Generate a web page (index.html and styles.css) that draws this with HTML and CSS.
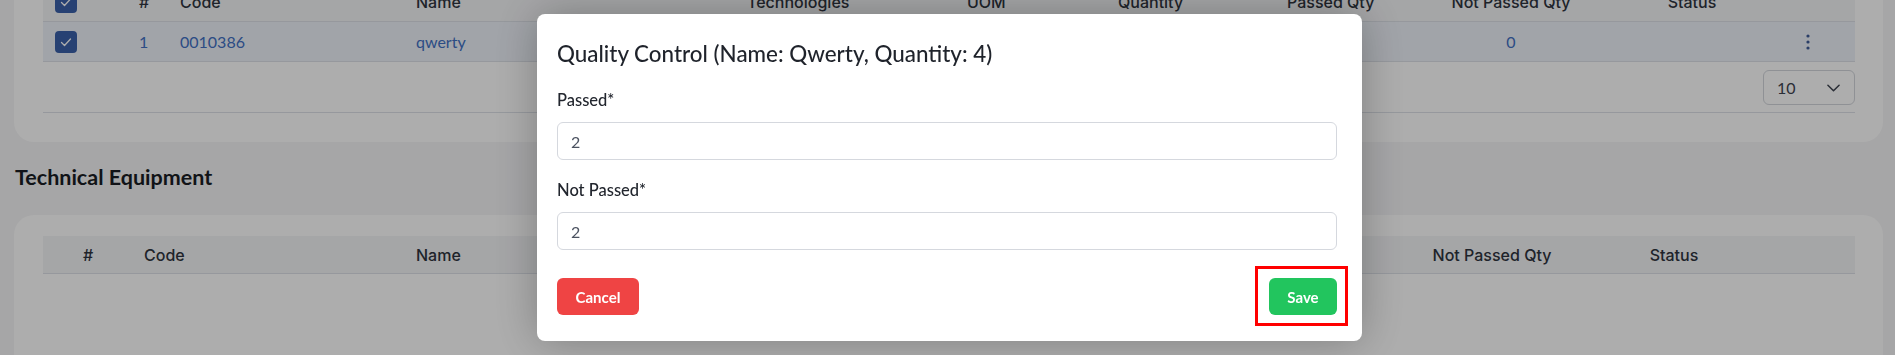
FILE: index.html
```html
<!DOCTYPE html>
<html lang="en">
<head>
<meta charset="utf-8">
<title>Quality Control</title>
<link rel="stylesheet" href="styles.css">
</head>
<body>
<main class="page">
  <section class="card card-top">
    <div class="grid grid-qc head-row">
      <div class="cell cell-chk"><svg class="chk" viewBox="0 0 22 22"><rect width="22" height="22" rx="4"/><path d="M6.5 11.5l3 3 6-6.5"/></svg></div>
      <div class="cell">#</div>
      <div class="cell">Code</div>
      <div class="cell">Name</div>
      <div class="cell">Technologies</div>
      <div class="cell">UOM</div>
      <div class="cell">Quantity</div>
      <div class="cell">Passed Qty</div>
      <div class="cell center">Not Passed Qty</div>
      <div class="cell center">Status</div>
      <div class="cell"></div>
    </div>
    <div class="grid grid-qc body-row selected">
      <div class="cell cell-chk"><svg class="chk" viewBox="0 0 22 22"><rect width="22" height="22" rx="4"/><path d="M6.5 11.5l3 3 6-6.5"/></svg></div>
      <div class="cell link">1</div>
      <div class="cell link">0010386</div>
      <div class="cell link">qwerty</div>
      <div class="cell link"></div>
      <div class="cell link">pcs</div>
      <div class="cell link">4</div>
      <div class="cell link">0</div>
      <div class="cell link center">0</div>
      <div class="cell center"></div>
      <div class="cell cell-act"><svg class="kebab" viewBox="0 0 4 16"><circle cx="2" cy="2" r="1.6"/><circle cx="2" cy="8" r="1.6"/><circle cx="2" cy="14" r="1.6"/></svg></div>
    </div>
    <div class="pager">
      <div class="select"><span>10</span><svg class="chev" viewBox="0 0 14 8"><path d="M1 1l6 6 6-6"/></svg></div>
    </div>
  </section>

  <h2 class="section-title">Technical Equipment</h2>

  <section class="card card-bottom">
    <div class="grid grid-te head-row head-te">
      <div class="cell cell-num">#</div>
      <div class="cell">Code</div>
      <div class="cell">Name</div>
      <div class="cell">Technologies</div>
      <div class="cell">UOM</div>
      <div class="cell">Quantity</div>
      <div class="cell">Passed Qty</div>
      <div class="cell center">Not Passed Qty</div>
      <div class="cell center">Status</div>
      <div class="cell"></div>
    </div>
  </section>
</main>

<div class="overlay"></div>

<div class="modal" role="dialog">
  <h3 class="modal-title">Quality Control (Name: Qwerty, Quantity: 4)</h3>
  <div class="field">
    <label class="label">Passed*</label>
    <div class="input">2</div>
  </div>
  <div class="field field-2">
    <label class="label">Not Passed*</label>
    <div class="input">2</div>
  </div>
  <div class="actions">
    <button class="btn btn-cancel">Cancel</button>
    <button class="btn btn-save">Save<span class="highlight"></span></button>
  </div>
</div>
</body>
</html>
```
FILE: styles.css
```css
* { box-sizing: border-box; }
html, body { margin: 0; padding: 0; }
body {
  background: #f5f5f7;
  font-family: "Lato", "Inter", sans-serif;
  color: #3e4450;
  width: 1895px;
  height: 355px;
  overflow: hidden;
}
.page {
  padding: 0 12px 0 14px;
  margin-top: -38px;
}
.card {
  background: #ffffff;
  border-radius: 20px;
}
.card-top {
  padding: 20px 28px 29px 29px;
}
.card-bottom {
  margin-top: 24px;
  padding: 21px 28px 0 29px;
  height: 220px;
}
.grid { display: grid; align-items: center; }
.grid-qc { grid-template-columns: 96px 41px 236px 331px 220px 151px 169px 127px 194px 168px 79px; }
.grid-te { grid-template-columns: 101px 272px 284px 200px 150px 150px 190px 204px 160px 101px; }
.head-row {
  height: 40px;
  background: #f4f5f7;
  border-bottom: 1px solid #dde1e8;
  font-family: "Inter", "Lato", sans-serif;
  font-size: 16px;
  font-weight: 500;
  color: #2f343e;
}
.head-te { height: 38px; }
.body-row {
  height: 40px;
  border-bottom: 1px solid #dde1e8;
  font-size: 16px;
}
.selected { background: #eef2f9; }
.cell { white-space: nowrap; line-height: 18px; }
.center { text-align: center; }
.cell-chk { padding-left: 12px; display: flex; align-items: center; }
.cell-num { padding-left: 40px; }
.cell-act { padding-left: 30px; display: flex; align-items: center; }
.link { color: #4170c4; }
.chk { width: 22px; height: 22px; display: block; }
.chk rect { fill: #3a60aa; }
.chk path { fill: none; stroke: #ffffff; stroke-width: 1.3; stroke-linecap: round; stroke-linejoin: round; }
.kebab { width: 4px; height: 16px; display: block; }
.kebab circle { fill: #3f5c98; }
.pager {
  display: flex;
  justify-content: flex-end;
  padding: 8px 0 7px;
  border-bottom: 1px solid #dde1e8;
}
.select {
  width: 92px;
  height: 35px;
  border: 1px solid #d3d6dc;
  border-radius: 6px;
  display: flex;
  align-items: center;
  justify-content: space-between;
  padding: 0 14px 0 13px;
  font-size: 16px;
  color: #3e4450;
}
.chev { width: 13px; height: 8px; display: block; }
.chev path { fill: none; stroke: #3e4450; stroke-width: 1.6; stroke-linecap: round; stroke-linejoin: round; }
.section-title {
  margin: 21px 0 0 1px;
  font-size: 21.5px;
  line-height: 28px;
  font-weight: 700;
  color: #1a1d24;
}
.overlay {
  position: fixed;
  inset: 0;
  background: rgba(0, 0, 0, 0.32);
}
.modal {
  position: fixed;
  top: 14px;
  left: 537px;
  width: 825px;
  background: #ffffff;
  border-radius: 8px;
  padding: 26px 25px 26px 20px;
  box-shadow: 0 0 45px rgba(0, 0, 0, 0.28);
}
.modal-title {
  margin: 0 0 20px;
  font-size: 22.4px;
  line-height: 28px;
  font-weight: 500;
  color: #1f232b;
}
.label {
  display: block;
  font-size: 16.5px;
  line-height: 24px;
  font-weight: 500;
  color: #22262e;
  margin-bottom: 10px;
}
.field-2 { margin-top: 18px; }
.input {
  height: 38px;
  border: 1px solid #d5d8de;
  border-radius: 6px;
  padding: 0 13px;
  display: flex;
  align-items: center;
  font-size: 16px;
  color: #4b5260;
}
.actions {
  margin-top: 28px;
  display: flex;
  justify-content: space-between;
}
.btn {
  height: 37px;
  border: 0;
  border-radius: 6px;
  font-family: inherit;
  font-size: 15px;
  font-weight: 700;
  color: #ffffff;
}
.btn-cancel { width: 82px; background: #ef4444; }
.btn-save { width: 68px; background: #22c55e; position: relative; }
.highlight {
  position: absolute;
  top: -12px;
  left: -14px;
  right: -11px;
  bottom: -11px;
  border: 3px solid #ff0000;
}
```
